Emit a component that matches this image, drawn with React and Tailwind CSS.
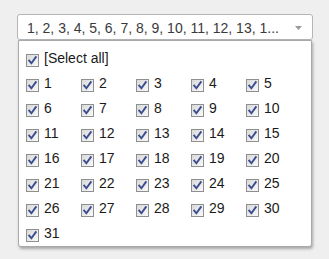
import React from 'react';

const days = Array.from({ length: 31 }, (_, i) => i + 1);

function Check() {
  return (
    <svg width="13" height="13" viewBox="0 0 13 13" className="shrink-0">
      <defs>
        <linearGradient id="cbfill" x1="0" y1="0" x2="1" y2="1">
          <stop offset="0" stopColor="#d8d8d8" />
          <stop offset="1" stopColor="#fafafa" />
        </linearGradient>
      </defs>
      <rect x="0.5" y="0.5" width="12" height="12" fill="url(#cbfill)" stroke="#8e8f8f" />
      <path d="M3.2 6.6 L5.4 9.3 L9.8 3.2" fill="none" stroke="#3b4d8f" strokeWidth="1.9" strokeLinecap="square" />
    </svg>
  );
}

function Option({ label }) {
  return (
    <div className="flex items-start gap-[5px] h-[17px]">
      <div className="mt-1">
        <Check />
      </div>
      <span className="leading-4 text-[#1a1a1a]">{label}</span>
    </div>
  );
}

export default function App() {
  return (
    <div className="w-full h-[259px] bg-[#efefef] pt-[14px] pl-[17px] text-[14px] font-['Liberation_Sans',Arial,sans-serif]">
      <div className="w-[296px]">
        {/* the select */}
        <div className="h-[26px] bg-white border border-[#b5b5b5] rounded-[3px] flex items-center pl-[9px] pr-[10px]">
          <span className="flex-1 whitespace-nowrap overflow-hidden text-[#3a3a3a] leading-4 pt-px">
            1, 2, 3, 4, 5, 6, 7, 8, 9, 10, 11, 12, 13, 1...
          </span>
          <svg width="7" height="4" viewBox="0 0 7 4" className="mt-px">
            <path d="M0 0 H7 L3.5 4 Z" fill="#9a9a9a" />
          </svg>
        </div>

        {/* dropdown list */}
        <div className="ml-px w-[294px] h-[207px] bg-white border border-[#a9a9a9] rounded-b-[3px] shadow-[1px_2px_3px_rgba(0,0,0,0.3)] pt-[9px] pl-[7px]">
          <div className="grid grid-cols-[55px_55px_55px_55px_55px] gap-y-[8px]">
            <div className="col-span-5">
              <Option label="[Select all]" />
            </div>
            {days.map((d) => (
              <Option key={d} label={d} />
            ))}
          </div>
        </div>
      </div>
    </div>
  );
}
